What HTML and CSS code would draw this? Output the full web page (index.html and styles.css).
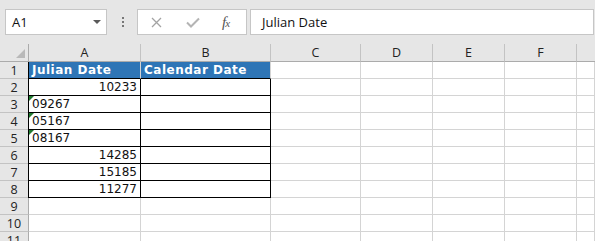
FILE: index.html
```html
<!DOCTYPE html>
<html lang="en">
<head>
    <meta charset="UTF-8">
    <title>Julian Date</title>
    <link rel="stylesheet" href="styles.css">
</head>
<body>
    <div class="toolbar">
        <div class="name-box">
            <span>A1</span>
            <span class="caret"></span>
        </div>
        <div class="grip"><i></i><i></i><i></i></div>
        <div class="fx-box">
            <svg class="ico-x" width="11" height="11" viewBox="0 0 11 11">
                <path d="M1 1L10 10M10 1L1 10" stroke="#a3a3a3" stroke-width="1.3" fill="none"/>
            </svg>
            <svg class="ico-ok" width="14" height="11" viewBox="0 0 14 11">
                <path d="M1 5.5L5 9.5L13 1.5" stroke="#b4b4b4" stroke-width="2" fill="none"/>
            </svg>
            <span class="fx">f<small>x</small></span>
        </div>
        <div class="formula">Julian Date</div>
    </div>

    <div class="sheet">
        <div class="corner"><span class="select-all"></span></div>
        <div class="ch">A</div>
        <div class="ch">B</div>
        <div class="ch">C</div>
        <div class="ch">D</div>
        <div class="ch">E</div>
        <div class="ch">F</div>
        <div class="ch last"></div>

        <div class="rh">1</div>
        <div class="cell t hd first">Julian Date</div>
        <div class="cell t hd">Calendar Date</div>
        <div class="cell"></div><div class="cell"></div><div class="cell"></div><div class="cell"></div><div class="cell"></div>

        <div class="rh">2</div>
        <div class="cell t first num">10233</div>
        <div class="cell t"></div>
        <div class="cell"></div><div class="cell"></div><div class="cell"></div><div class="cell"></div><div class="cell"></div>

        <div class="rh">3</div>
        <div class="cell t first txt">09267</div>
        <div class="cell t"></div>
        <div class="cell"></div><div class="cell"></div><div class="cell"></div><div class="cell"></div><div class="cell"></div>

        <div class="rh">4</div>
        <div class="cell t first txt">05167</div>
        <div class="cell t"></div>
        <div class="cell"></div><div class="cell"></div><div class="cell"></div><div class="cell"></div><div class="cell"></div>

        <div class="rh">5</div>
        <div class="cell t first txt">08167</div>
        <div class="cell t"></div>
        <div class="cell"></div><div class="cell"></div><div class="cell"></div><div class="cell"></div><div class="cell"></div>

        <div class="rh">6</div>
        <div class="cell t first num">14285</div>
        <div class="cell t"></div>
        <div class="cell"></div><div class="cell"></div><div class="cell"></div><div class="cell"></div><div class="cell"></div>

        <div class="rh">7</div>
        <div class="cell t first num">15185</div>
        <div class="cell t"></div>
        <div class="cell"></div><div class="cell"></div><div class="cell"></div><div class="cell"></div><div class="cell"></div>

        <div class="rh">8</div>
        <div class="cell t first num">11277</div>
        <div class="cell t"></div>
        <div class="cell"></div><div class="cell"></div><div class="cell"></div><div class="cell"></div><div class="cell"></div>

        <div class="rh">9</div>
        <div class="cell"></div><div class="cell"></div><div class="cell"></div><div class="cell"></div><div class="cell"></div><div class="cell"></div><div class="cell"></div>

        <div class="rh">10</div>
        <div class="cell"></div><div class="cell"></div><div class="cell"></div><div class="cell"></div><div class="cell"></div><div class="cell"></div><div class="cell"></div>

        <div class="rh">11</div>
        <div class="cell"></div><div class="cell"></div><div class="cell"></div><div class="cell"></div><div class="cell"></div><div class="cell"></div><div class="cell"></div>
    </div>
</body>
</html>
```

FILE: styles.css
```css
* {
    margin: 0;
    padding: 0;
    box-sizing: border-box;
}

body {
    width: 595px;
    height: 241px;
    overflow: hidden;
    background: #fff;
    color: #222;
    font-family: "Open Sans", "Noto Sans", sans-serif;
}

/* formula bar */
.toolbar {
    height: 44px;
    background: #e6e6e6;
    display: flex;
    align-items: flex-start;
    padding: 9px 1px 0 5px;
}

.name-box {
    width: 102px;
    height: 26px;
    background: #fff;
    border: 1px solid #c6c6c6;
    display: flex;
    align-items: center;
    justify-content: space-between;
    padding: 0 5px 0 6px;
    font-size: 13px;
    color: #111;
}

.caret {
    width: 0;
    height: 0;
    border-left: 4px solid transparent;
    border-right: 4px solid transparent;
    border-top: 4px solid #5a5a5a;
}

.grip {
    display: flex;
    flex-direction: column;
    gap: 2px;
    margin: 8px 0 0 15px;
}

.grip i {
    width: 2px;
    height: 2px;
    background: #777;
}

.fx-box {
    width: 110px;
    height: 26px;
    margin-left: 13px;
    background: #fff;
    border: 1px solid #c6c6c6;
    display: flex;
    align-items: center;
    padding-left: 13px;
}

.ico-ok {
    margin-left: 24px;
}

.fx {
    margin-left: 22px;
    font-family: "Liberation Serif", serif;
    font-style: italic;
    font-size: 15px;
    color: #555;
    letter-spacing: -1px;
}

.fx small {
    font-size: 11px;
}

.formula {
    flex: 1;
    height: 26px;
    margin-left: 3px;
    background: #fff;
    border: 1px solid #c6c6c6;
    display: flex;
    align-items: center;
    padding-left: 11px;
    font-size: 13px;
    color: #111;
}

/* grid */
.sheet {
    display: grid;
    grid-template-columns: 29px 112px 130px 90px 72px 72px 72px 1fr;
    grid-template-rows: 18px repeat(11, 17px);
}

.corner,
.ch {
    background: #e6e6e6;
    border-bottom: 1px solid #ababab;
    border-right: 1px solid #c3c3c3;
    font-size: 12.5px;
    color: #222;
    display: flex;
    align-items: center;
    justify-content: center;
}

.ch.last {
    border-right: none;
}

.corner {
    border-right-color: #ababab;
    align-items: flex-end;
    justify-content: flex-end;
    padding: 0 3px 3px 0;
}

.select-all {
    width: 0;
    height: 0;
    border-left: 9px solid transparent;
    border-bottom: 9px solid #b9b9b9;
}

.rh {
    background: #e6e6e6;
    border-right: 1px solid #ababab;
    border-bottom: 1px solid #c3c3c3;
    font-size: 12.5px;
    color: #222;
    display: flex;
    align-items: center;
    justify-content: center;
}

.cell {
    border-right: 1px solid #d4d4d4;
    border-bottom: 1px solid #d4d4d4;
    font-family: "DejaVu Sans", Verdana, sans-serif;
    font-size: 12px;
    color: #111;
    display: flex;
    align-items: center;
    padding: 0 3px;
    white-space: nowrap;
    position: relative;
}

.cell.t {
    border-right-color: #000;
    border-bottom-color: #000;
}

.cell.first {
    box-shadow: -1px 0 0 #000;
}

.cell.hd {
    background: #2e75b6;
    color: #fff;
    font-weight: bold;
    letter-spacing: 0.5px;
    border-right-color: #d4d4d4;
}

.cell.num {
    justify-content: flex-end;
}

/* number stored as text indicator */
.cell.txt::before {
    content: '';
    position: absolute;
    top: 0;
    left: 0;
    border-top: 5px solid #1f7a2e;
    border-right: 5px solid transparent;
}
```
